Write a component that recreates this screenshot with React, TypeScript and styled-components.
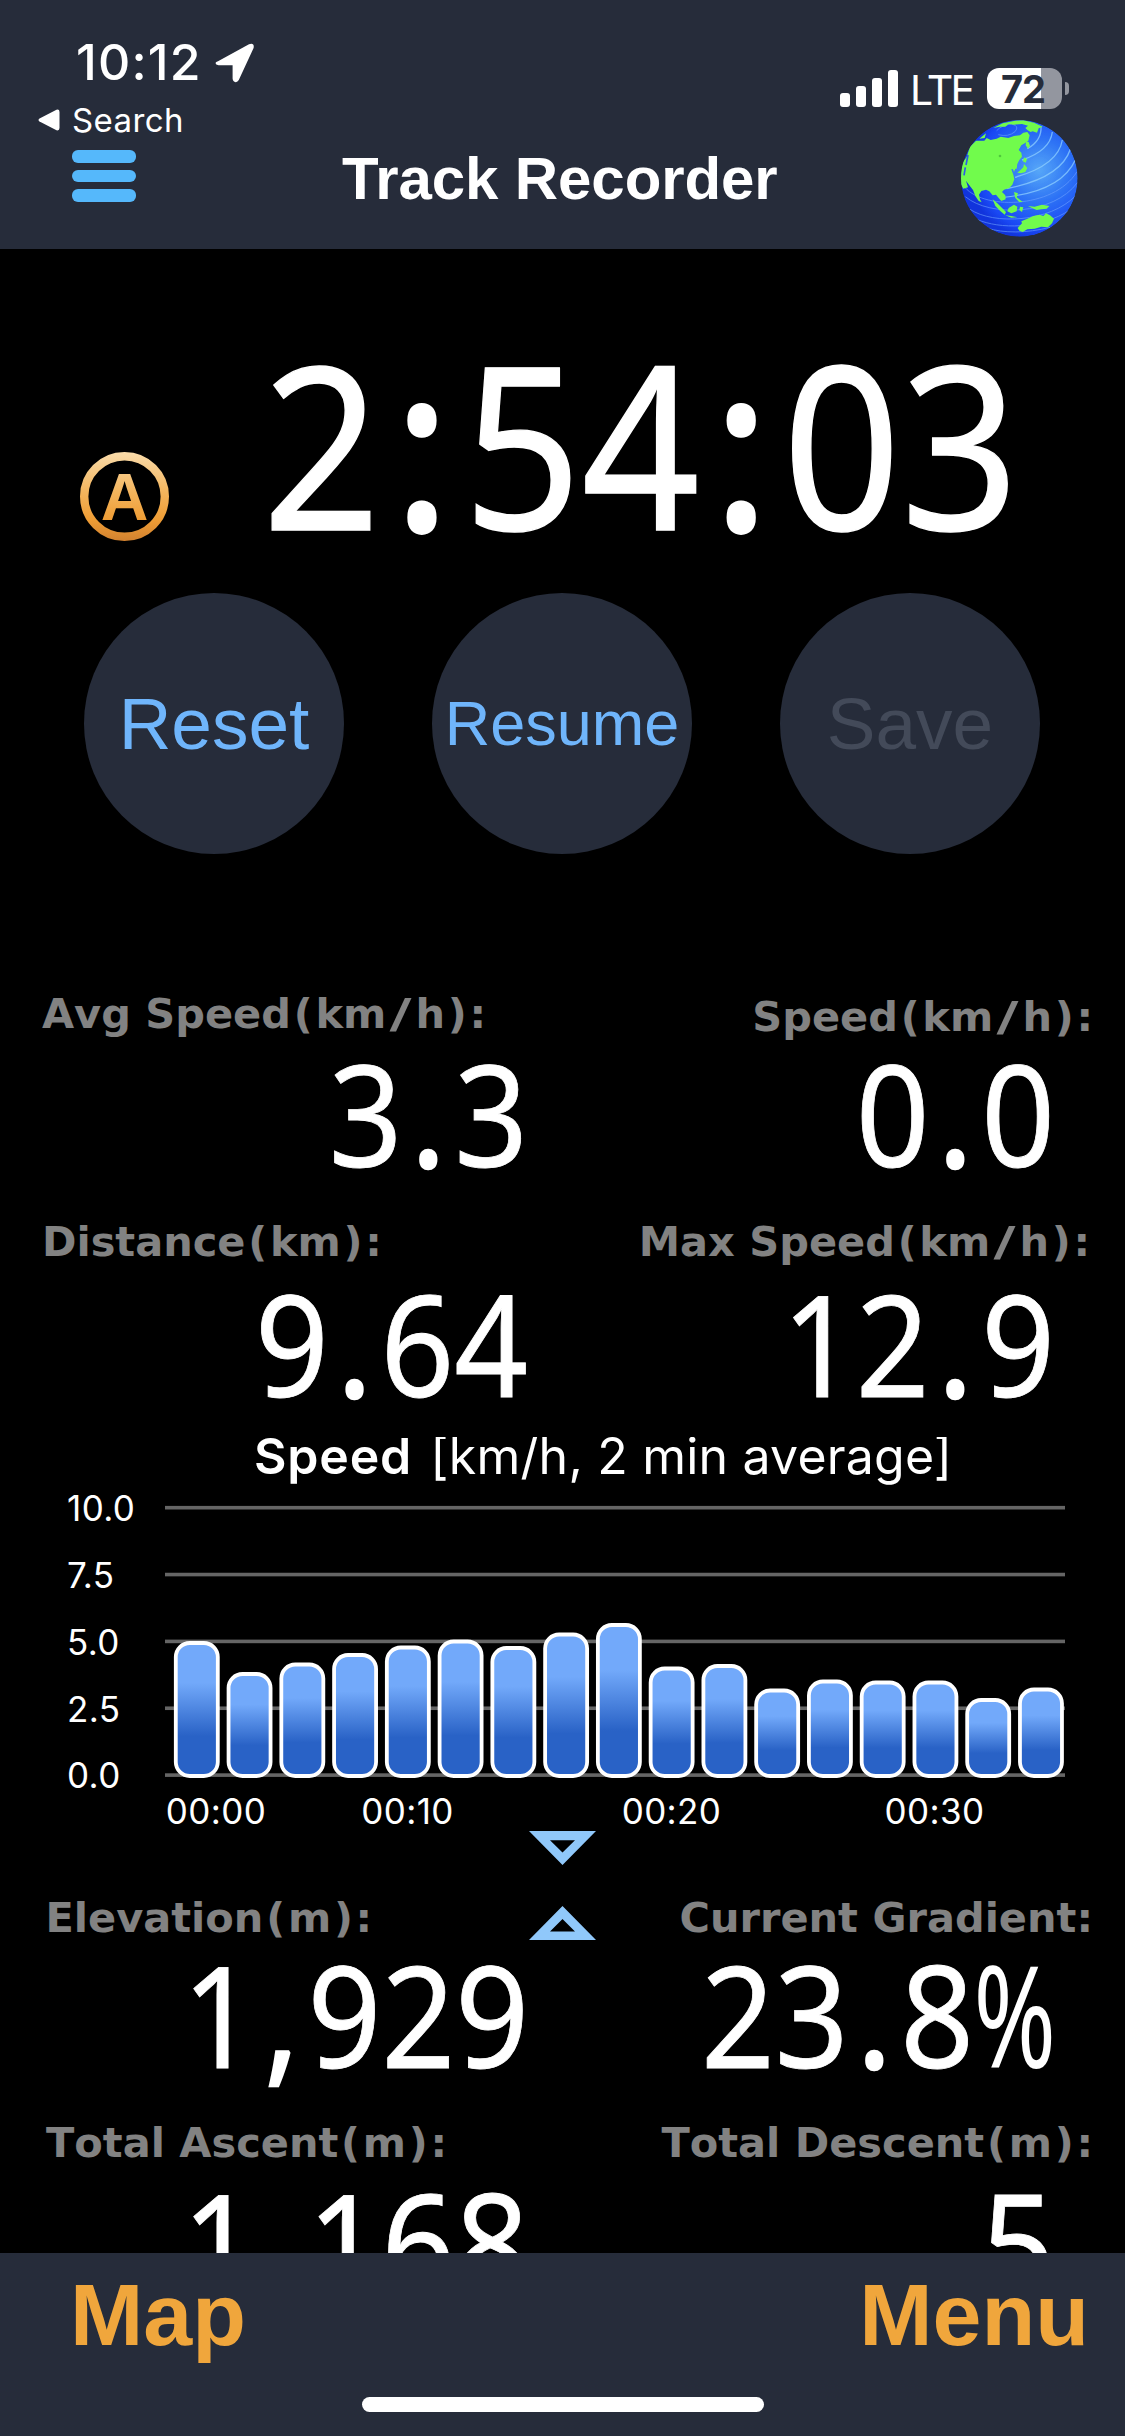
import React from "react";
import styled, { createGlobalStyle } from "styled-components";

const NAVY = "#262c3a";
const SKY = "#6fb5fb";
const ORANGE = "#f0a63c";
const UI = `Inter, "Liberation Sans", sans-serif`;
const HELV = `"Liberation Sans", Arial, sans-serif`;

const Global = createGlobalStyle`
  html, body { margin: 0; padding: 0; background: #000; }
  * { box-sizing: border-box; }
`;

const Screen = styled.div`
  width: 1125px;
  height: 2436px;
  display: flex;
  flex-direction: column;
  overflow: hidden;
  background: #000;
  color: #fff;
  font-family: ${UI};
`;

/* ---------- header ---------- */
const Header = styled.header`
  flex: none;
  height: 249px;
  background: ${NAVY};
`;
const StatusBar = styled.div`
  height: 120px;
  display: flex;
  justify-content: space-between;
  padding: 32px 56px 0 38px;
`;
const ClockRow = styled.div`
  display: flex;
  align-items: flex-start;
  padding-left: 38px;
  height: 60px;
  svg { margin: 11px 0 0 13px; }
`;
const Clock = styled.span`
  font-size: 50px;
  line-height: 60px;
  font-weight: 500;
  letter-spacing: 1.2px;
  white-space: nowrap;
`;
const BackRow = styled.div`
  display: flex;
  align-items: center;
  gap: 12px;
  margin-top: 8px;
  height: 40px;
`;
const BackText = styled.span`
  font-size: 33px;
  line-height: 40px;
  letter-spacing: 0.4px;
`;
const Indicators = styled.div`
  display: flex;
  align-items: flex-start;
  padding-top: 36px;
`;
const Signal = styled.div`
  display: flex;
  align-items: flex-end;
  gap: 6px;
  height: 39px;
`;
const SignalBar = styled.i<{ $h: number }>`
  width: 10px;
  height: ${(p) => p.$h}px;
  border-radius: 3px;
  background: #fff;
`;
const Carrier = styled.span`
  font-size: 41px;
  line-height: 44px;
  width: 61px;
  margin-left: 12px;
  letter-spacing: -2.6px;
`;
const Battery = styled.div`
  width: 75px;
  height: 41px;
  margin-left: 16px;
  border-radius: 12px;
  background: linear-gradient(90deg, #fff 72%, #93969f 72%);
  color: ${NAVY};
  font-size: 38px;
  line-height: 42px;
  font-weight: 700;
  text-align: center;
  letter-spacing: -1px;
  padding-right: 3px;
`;
const BatteryTip = styled.i`
  width: 4px;
  height: 13px;
  margin: 14px 0 0 3px;
  border-radius: 0 5px 5px 0;
  background: #93969f;
`;
const NavBar = styled.div`
  display: grid;
  grid-template-columns: 271px 1fr 185px;
  height: 129px;
`;
const MenuIcon = styled.div`
  display: flex;
  flex-direction: column;
  gap: 7px;
  padding: 30px 0 0 72px;
  i { width: 64px; height: 12.5px; border-radius: 6px; background: #55b8fb; }
`;
const Title = styled.h1`
  margin: 0;
  padding: 24px 0 0 71px;
  font: 700 60px/70px ${HELV};
  letter-spacing: -0.1px;
  white-space: nowrap;
`;

/* ---------- body ---------- */
const Body = styled.main`
  flex: none;
  height: 2004px;
  overflow: hidden;
`;
const TimerRow = styled.section`
  display: flex;
  justify-content: space-between;
  height: 344px;
  padding: 78px 106px 0 80px;
`;
const Badge = styled.svg`
  margin-top: 125px;
  flex: none;
`;
const Digits = styled.div<{ $size: number; $lh: number }>`
  font-family: "Noto Sans", "Open Sans", sans-serif;
  font-size: ${(p) => p.$size}px;
  line-height: ${(p) => p.$lh}px;
  height: ${(p) => p.$lh}px;
  text-align: right;
  white-space: nowrap;
  -webkit-text-stroke: 0.006em #fff;
  transform: scaleX(0.915);
  transform-origin: right center;
`;
const Sep = styled.span`
  padding: 0 0.066em;
  -webkit-text-stroke: 0.017em #fff;
`;
const Percent = styled.span`
  display: inline-block;
  width: 0.628em;
  text-align: left;
  transform: scaleX(0.77);
  transform-origin: left center;
  -webkit-text-stroke: 0;
`;
const Buttons = styled.section`
  display: flex;
  gap: 88px;
  padding-left: 84px;
`;
const RoundButton = styled.button<{ $size: number; $dim?: boolean }>`
  width: 260px;
  height: 261px;
  border: 0;
  padding: 0;
  border-radius: 50%;
  background: ${NAVY};
  color: ${(p) => (p.$dim ? "#434a59" : SKY)};
  font: 400 ${(p) => p.$size}px/261px ${HELV};
`;
const StatGrid = styled.section`
  display: grid;
  grid-template-columns: 528px 567px;
  row-gap: 30px;
  margin-top: 130px;
`;
const Stat = styled.div`
  display: flex;
  flex-direction: column;
`;
const LabelText = styled.div<{ $x?: number; $right?: boolean; $h?: number; $drop?: number; $inset?: number }>`
  height: ${(p) => p.$h ?? 58}px;
  padding: ${(p) => p.$drop ?? 0}px ${(p) => p.$inset ?? 2}px 0 ${(p) => p.$x ?? 0}px;
  color: #828282;
  font: 700 41.5px/60px "DejaVu Sans", Verdana, sans-serif;
  font-kerning: none;
  text-align: ${(p) => (p.$right ? "right" : "left")};
  white-space: nowrap;
`;
const Paren = styled.span`
  padding: 0 2.75px;
`;
const Slash = styled.span`
  display: inline-block;
  margin: 0 7px;
  transform: scaleX(1.45);
`;
const Inset = styled.div`
  padding-right: 40px;
`;
const LowerGrid = styled.section`
  display: grid;
  grid-template-columns: 529px 67px 499px;
`;
const LowerColumn = styled.div`
  padding-top: 56.5px;
`;
const Spacer = styled.div`
  height: 29.5px;
`;
const Splitter = styled.div`
  display: flex;
  flex-direction: column;
  gap: 41px;
`;

/* ---------- chart ---------- */
const ChartBox = styled.section`
  height: 394px;
  margin-top: 25px;
  overflow: hidden;
`;
const ChartTitle = styled.div`
  height: 50px;
  margin-top: -1px;
  padding-left: 254px;
  font-size: 50px;
  line-height: 40px;
  white-space: nowrap;
  letter-spacing: 0.2px;
  b { font-weight: 600; margin-right: 4px; letter-spacing: 0.8px; }
`;

/* ---------- footer ---------- */
const Footer = styled.footer`
  flex: none;
  height: 183px;
  background: ${NAVY};
`;
const FooterRow = styled.div`
  display: flex;
  justify-content: space-between;
  padding: 12px 36px 0 70px;
  color: ${ORANGE};
  font: 700 88px/100px ${HELV};
`;
const HomeBar = styled.div`
  width: 402px;
  height: 15px;
  margin: 32px auto 0;
  border-radius: 8px;
  background: #fff;
`;

function Num({ text, size = 141, lh = 140 }: { text: string; size?: number; lh?: number }) {
  return (
    <Digits $size={size} $lh={lh}>
      {text.split(/([:.,%])/).map((part, i) =>
        part === "%" ? <Percent key={i}>%</Percent> : /[:.,]/.test(part) ? <Sep key={i}>{part}</Sep> : part
      )}
    </Digits>
  );
}

type LabelProps = { text: string; $x?: number; $right?: boolean; $h?: number; $drop?: number; $inset?: number };

function Label({ text, ...rest }: LabelProps) {
  return (
    <LabelText {...rest}>
      {text.split(/([()/])/).map((part, i) =>
        part === "/" ? <Slash key={i}>/</Slash> : /^[()]$/.test(part) ? <Paren key={i}>{part}</Paren> : part
      )}
    </LabelText>
  );
}

function Globe() {
  return (
    <svg width="150" height="129" viewBox="0 30 450 387">
      <defs>
        <radialGradient id="sea" cx="0.67" cy="0.43" r="0.6">
          <stop offset="0" stopColor="#58a8f8" />
          <stop offset="0.45" stopColor="#2f74f5" />
          <stop offset="0.85" stopColor="#1a49f4" />
          <stop offset="1" stopColor="#1235dd" />
        </radialGradient>
        <clipPath id="disc"><circle cx="238" cy="205" r="175" /></clipPath>
      </defs>
      <g clipPath="url(#disc)">
        <circle cx="238" cy="205" r="175" fill="url(#sea)" />
        <g fill="none" stroke="#8fd0ff" strokeWidth="4" opacity="0.75">
          <path d="M262 116Q306 92 303 48" />
          <path d="M246 150Q330 122 337 66" />
          <path d="M225 202Q355 165 367 90" />
          <path d="M200 236Q362 205 391 118" />
          <path d="M190 262Q362 245 406 150" />
        </g>
        <g fill="none" stroke="#6fa4ff" strokeWidth="3" opacity="0.6">
          <path d="M170 62Q185 45 215 42Q240 48 225 65Q205 82 175 74" />
          <path d="M70 226C120 300 340 300 411 185" />
          <path d="M76 260C150 322 340 316 412 218" />
          <path d="M90 298C160 345 330 338 408 256" />
          <path d="M110 328C180 358 300 358 390 300" />
          <path d="M140 354C190 370 260 370 330 352" />
        </g>
        <g fill="#71fb4c">
          <path d="M60 170L80 140 90 110 108 92 133 92 140 84 152 90 170 86 182 80 205 84 222 78 240 76 250 68 262 66 269 76 265 92 254 100 244 106 236 120 244 128 246 140 238 150 232 162 230 176 214 178 220 194 223 208 217 224 208 234 192 239 186 246 196 256 197 268 184 273 176 264 168 254 158 256 148 244 138 239 124 243 117 254 120 268 125 277 116 273 106 258 99 240 88 226 78 212 84 232 70 236 62 222z" />
          <path d="M118 86L138 70 134 84zM160 54L188 40 225 32 250 31 282 38 308 50 296 55 291 68 278 64 272 66 262 60 256 54 264 47 246 42 222 44 206 42 196 50 178 50z" />
          <path d="M258 94L266 96 270 108 264 116 257 106zM254 142L261 148 257 158 248 154zM252 162L262 174 256 186 242 190 232 188 244 178 250 172zM215 168L226 176 222 186z" />
          <path d="M222 246L234 250 230 262 238 268 248 276 238 276 226 264zM158 268L172 280 184 292 198 306 194 314 180 302 166 288zM196 316L214 318 232 322 214 323zM206 294L222 284 232 290 230 304 214 310 202 304zM240 290L250 292 246 306 238 300zM264 288L284 290 306 284 328 288 320 296 304 298 290 300 276 294z" />
          <path d="M233 354L246 340 244 334 262 326 280 318 298 314 310 318 318 310 330 316 342 326 336 340 324 352 304 350 284 356 262 358 248 366 238 362z" />
        </g>
        <path d="M84 135L78 165M76 172L72 196" stroke="#2d5be8" strokeWidth="5" />
        <circle cx="180" cy="138" r="4" fill="#4fc83c" />
      </g>
    </svg>
  );
}

const barTops = [1641, 1672, 1662.5, 1653, 1645.5, 1639.5, 1646, 1632.5, 1623, 1666.5, 1664, 1688.5, 1679.5, 1680.5, 1680.5, 1698, 1687.5];
const yTicks = ["10.0", "7.5", "5.0", "2.5", "0.0"];
const xTicks: [string, number][] = [["00:00", 216], ["00:10", 407.5], ["00:20", 671.5], ["00:30", 934.5]];

function SpeedChart() {
  return (
    <svg width="1125" height="345" viewBox="0 1486 1125 345" fontFamily={UI} fontSize="35" fill="#fff">
      <defs>
        <linearGradient id="bar" x1="0" y1="0" x2="0" y2="1">
          <stop offset="0.3" stopColor="#72a9fa" />
          <stop offset="0.7" stopColor="#2962c6" />
        </linearGradient>
      </defs>
      {yTicks.map((t, i) => (
        <g key={t}>
          <rect x="165" y={1505.9 + i * 66.85} width="900" height="3.6" fill="#656565" />
          <text x="67" y={1521 + i * 66.85} letterSpacing="0.4">{t}</text>
        </g>
      ))}
      {barTops.map((y, i) => (
        <rect key={i} x={175.8 + i * 52.76} y={y + 2} width="42" height={1774 - y} rx="14" fill="url(#bar)" stroke="#fff" strokeWidth="3.8" />
      ))}
      {xTicks.map(([t, x]) => (
        <text key={t} x={x} y="1823.5" textAnchor="middle" letterSpacing="0.4">{t}</text>
      ))}
    </svg>
  );
}

export default function App() {
  return (
    <Screen>
      <Global />
      <Header>
        <StatusBar>
          <div>
            <ClockRow>
              <Clock>10:12</Clock>
              <svg width="40" height="40" viewBox="0 0 40 40">
                <path d="M3 18.2L34 1.2Q39.6 -0.6 38.6 5L23.8 37Q22 40.2 19 38.6Q17.6 37.6 17.6 35.6V22.3H3.6Q0.4 21.8 0.5 20Q0.8 19 3 18.2z" fill="#fff" />
              </svg>
            </ClockRow>
            <BackRow>
              <svg width="22" height="22" viewBox="0 0 22 22">
                <path d="M1.5 9.5L18.5 0.7Q21.5 0 21.5 3V19Q21.5 22 18.5 21.3L1.5 12.5Q-0.5 11 1.5 9.5z" fill="#fff" />
              </svg>
              <BackText>Search</BackText>
            </BackRow>
          </div>
          <Indicators>
            <Signal>
              <SignalBar $h={14} /><SignalBar $h={21} /><SignalBar $h={29} /><SignalBar $h={37} />
            </Signal>
            <Carrier>LTE</Carrier>
            <Battery>72</Battery>
            <BatteryTip />
          </Indicators>
        </StatusBar>
        <NavBar>
          <MenuIcon><i /><i /><i /></MenuIcon>
          <Title>Track Recorder</Title>
          <Globe />
        </NavBar>
      </Header>

      <Body>
        <TimerRow>
          <Badge width="90" height="90" viewBox="0 0 90 90">
            <defs>
              <linearGradient id="gold" gradientUnits="userSpaceOnUse" x1="0" y1="0" x2="0" y2="90">
                <stop offset="0" stopColor="#fadcab" />
                <stop offset="0.45" stopColor="#f3b45c" />
                <stop offset="0.75" stopColor="#ef9d35" />
                <stop offset="1" stopColor="#d0802f" />
              </linearGradient>
            </defs>
            <circle cx="44.5" cy="44.5" r="40.3" fill="none" stroke="url(#gold)" strokeWidth="8.4" />
            <text x="44.5" y="67.5" textAnchor="middle" fontFamily={HELV} fontWeight="700" fontSize="66" fill="url(#gold)">A</text>
          </Badge>
          <Num text="2:54:03" size={226} lh={230} />
        </TimerRow>

        <Buttons>
          <RoundButton $size={73}>Reset</RoundButton>
          <RoundButton $size={63}>Resume</RoundButton>
          <RoundButton $size={73} $dim>Save</RoundButton>
        </Buttons>

        <StatGrid>
          <Stat>
            <Label text="Avg Speed(km/h):" $x={42} />
            <Num text="3.3" />
          </Stat>
          <Stat>
            <Label text="Speed(km/h):" $right $drop={3} />
            <Inset><Num text="0.0" /></Inset>
          </Stat>
          <Stat>
            <Label text="Distance(km):" $x={42} $h={60} />
            <Num text="9.64" />
          </Stat>
          <Stat>
            <Label text="Max Speed(km/h):" $right $h={60} $inset={5} />
            <Inset><Num text="12.9" /></Inset>
          </Stat>
        </StatGrid>

        <ChartBox>
          <ChartTitle><b>Speed</b> [km/h, 2 min average]</ChartTitle>
          <SpeedChart />
        </ChartBox>

        <LowerGrid>
          <LowerColumn>
            <Label text="Elevation(m):" $x={45.5} $h={55.5} />
            <Num text="1,929" />
            <Spacer />
            <Label text="Total Ascent(m):" $x={46} />
            <Num text="1,168" />
          </LowerColumn>
          <Splitter>
            <svg width="67" height="34" viewBox="0 0 67 34">
              <path d="M0 0H67L33.5 34zM21 9.3L33.5 21.6 46 9.3z" fill="#90c8fa" fillRule="evenodd" />
            </svg>
            <svg width="67" height="34" viewBox="0 0 67 34">
              <path d="M0 34H67L33.5 0zM21 25.5L33.5 13 46 25.5z" fill="#90c8fa" fillRule="evenodd" />
            </svg>
          </Splitter>
          <LowerColumn>
            <Label text="Current Gradient:" $right $h={55.5} />
            <Inset><Num text="23.8%" /></Inset>
            <Spacer />
            <Label text="Total Descent(m):" $right />
            <Inset><Num text="5" /></Inset>
          </LowerColumn>
        </LowerGrid>
      </Body>

      <Footer>
        <FooterRow><span>Map</span><span>Menu</span></FooterRow>
        <HomeBar />
      </Footer>
    </Screen>
  );
}
